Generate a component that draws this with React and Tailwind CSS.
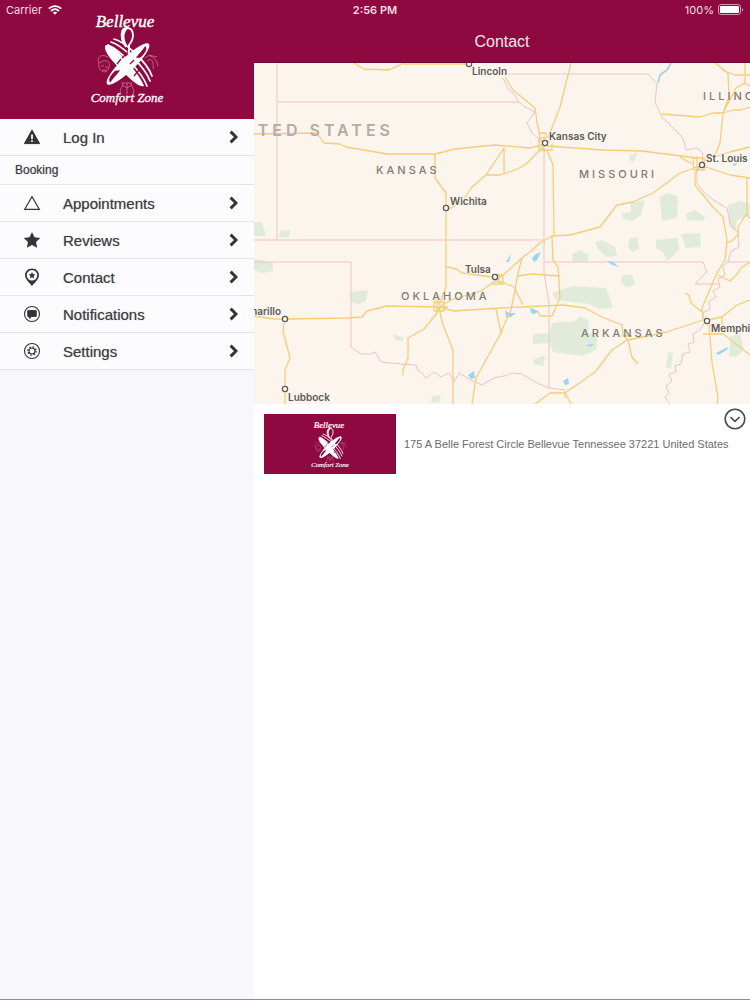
import React from "react";

const menuItems = [
  { label: "Appointments", icon: "triangle" },
  { label: "Reviews", icon: "star" },
  { label: "Contact", icon: "pin" },
  { label: "Notifications", icon: "chat" },
  { label: "Settings", icon: "gear" },
];

const icons = {
  warning: (
    <>
      <path d="M9 2 L16.6 15.6 H1.4 Z" fill="#333436" stroke="#333436" strokeLinejoin="round" />
      <path d="M9 6.6 V11" stroke="#fff" strokeWidth="1.8" />
      <circle cx="9" cy="13" r="1" fill="#fff" />
    </>
  ),
  triangle: <path d="M9 2.6 L16.4 15.4 H1.6 Z" fill="none" stroke="#333436" strokeWidth="1.1" />,
  star: (
    <path
      d="M9 1 L11.5 6.3 L17.3 7 L13 11 L14.2 16.8 L9 13.9 L3.8 16.8 L5 11 L0.7 7 L6.5 6.3 Z"
      fill="#333436"
    />
  ),
  pin: (
    <>
      <path
        fillRule="evenodd"
        d="M9 0.4 C5 0.4 2 3.3 2 7.2 C2 11.2 6 14 9 18 C12 14 16 11.2 16 7.2 C16 3.3 13 0.4 9 0.4 Z M9 2 A5.3 5.3 0 1 1 9 12.6 A5.3 5.3 0 1 1 9 2 Z"
        fill="#333436"
      />
      <path
        d="M9 3.9 L10 6.1 L12.3 6.4 L10.6 8 L11.1 10.4 L9 9.2 L6.9 10.4 L7.4 8 L5.7 6.4 L8 6.1 Z"
        fill="#333436"
      />
    </>
  ),
  chat: (
    <>
      <circle cx="9" cy="9" r="7.5" fill="none" stroke="#333436" strokeWidth="1.1" />
      <path d="M4.8 5.6 H13.2 V11.4 H8.6 L6.6 13.4 V11.4 H4.8 Z" fill="#333436" stroke="#333436" strokeLinejoin="round" />
    </>
  ),
  gear: (
    <g fill="none" stroke="#333436">
      <circle cx="9" cy="9" r="7.5" strokeWidth="1.1" />
      <circle cx="9" cy="9" r="3" strokeWidth="1.1" />
      <circle cx="9" cy="9" r="4.1" strokeWidth="1.4" strokeDasharray="1.5 1.72" />
    </g>
  ),
};

const Logo = ({ className }) => (
  <svg viewBox="0 0 80 100" className={className} role="img" aria-label="Bellevue Comfort Zone">
    <g fill="#fff" fontFamily="'Liberation Serif', serif" fontStyle="italic" textAnchor="middle">
      <text x="38" y="19" fontSize="17" stroke="#fff" strokeWidth="0.4">Bellevue</text>
      <text x="40" y="94" fontSize="13" stroke="#fff" strokeWidth="0.3">Comfort Zone</text>
    </g>
    {/* face, palm and hands behind the whisk */}
    <g fill="none" stroke="#c9769b" strokeWidth="0.8">
      <path d="M21 49 C14 45 9 50 12 55 C10 63 20 68 22 59 C24 54 19 50 12 55 M14 58 H17 M18 59 H21 M15 62 H20" />
      <path d="M58 50 C62 45 69 49 71 58 M60 53 C65 49 67 54 66 61 M62 47 L70 49" />
      <path d="M34 86 C31 80 38 79 35 74 M46 86 C49 80 42 79 45 74 M36 75 H44 M40 75 V86 M35 77 L40 80 L45 77" />
    </g>
    {/* fork */}
    <g fill="none" stroke="#fff" strokeLinecap="round">
      <path d="M27 31 C36 33 59 52 65 68" strokeWidth="1.7" />
      <path d="M24 34 C34 37 57 57 63 73" strokeWidth="1.7" />
      <path d="M21 37 C31 41 54 62 60 78" strokeWidth="1.7" />
    </g>
    <path d="M18 38 C20 35 27 40 34 47 C44 57 54 70 57 78 C52 80 42 70 34 62 C25 53 17 44 18 38 Z" fill="#fff" />
    {/* whisk */}
    <g transform="rotate(46 41 56)">
      <ellipse cx="41" cy="56" rx="7" ry="29" fill="#fff" />
      <path d="M40 31 C44 31 45 36 45 43 L42 46 C41 40 41 36 40 31 Z" fill="#8e093f" />
      <path d="M42 82 C38 81 37 77 37 70 L40 66 C41 72 41 77 42 82 Z" fill="#8e093f" />
      <path d="M40 50 L42 50 L42 62 L40 62 Z" fill="#fff" />
    </g>
    <path d="M35 50 L41 44 M47 68 L52 62 M30 56 L34 51 M43 56 L47 52" stroke="#8e093f" strokeWidth="1.3" />
    {/* spoon */}
    <path d="M39 39 C33 31 33 20 40 20 C47 20 48 30 42 37 V46" fill="none" stroke="#fff" strokeWidth="1.8" />
    <path d="M39 37 C33 31 33 20 41 20.5 C37 24 36 30 40 37 Z" fill="#fff" />
  </svg>
);

const MenuRow = ({ label, icon }) => (
  <li className="border-b border-[#e4e3e8] bg-[#fcfbfe]">
    <a href="#" className="flex h-9 items-center pl-[23px] pr-4">
      <svg viewBox="0 0 18 18" className="h-[18px] w-[18px]" aria-hidden="true">
        {icons[icon]}
      </svg>
      <span className="ml-[22px] flex-1 pt-0.5 text-[15px] text-[#3c3d3f] [text-shadow:0_0_1px_#33343680]">
        {label}
      </span>
      <svg viewBox="0 0 9 14" className="h-3.5 w-[9px]" aria-hidden="true">
        <path d="M1.6 1.6 L7 7 L1.6 12.4" fill="none" stroke="#333436" strokeWidth="2.9" />
      </svg>
    </a>
  </li>
);

const parks = [
  "M254 222 H262 L266 236 H254 Z M280 231 L291 230 L289 237 L279 238 Z",
  "M254 259 L273 262 V271 L262 273 L254 270 Z",
  "M351 292 L368 290 L366 301 L358 304 L351 302 Z",
  "M393 334 L404 338 L403 341 L395 340 Z M432 396 L441 395 L439 403 L431 402 Z",
  "M572 254 L580 250 L589 255 L587 262 H573 Z",
  "M595 242 L602 240 L615 247 L617 256 L606 257 L598 249 Z",
  "M630 238 L638 237 L639 249 L632 252 L628 246 Z",
  "M656 240 L678 238 L679 250 L667 261 L663 252 L656 248 Z",
  "M681 234 L700 233 L701 247 L686 248 Z",
  "M622 275 L632 275 L635 285 L626 287 L621 282 Z",
  "M552 293 L572 286 L606 288 L613 308 L600 309 L588 304 L556 300 Z",
  "M533 334 L549 333 L552 323 L575 321 L580 316 L589 321 L588 333 L598 334 L596 350 L583 356 L553 352 L550 343 L533 344 Z",
  "M533 360 L545 355 L543 366 L534 364 Z",
  "M668 352 L673 353 L671 369 L666 367 Z",
  "M730 337 L740 333 L744 350 L736 357 L729 356 Z",
  "M622 213 L631 212 L630 203 L645 200 L641 215 L632 221 L623 219 Z",
  "M660 197 L667 193 L678 196 L677 218 L662 221 Z",
  "M686 214 L695 210 L705 217 L704 221 L687 220 Z",
  "M728 205 L740 201 L750 204 V216 L737 220 L735 232 L729 226 Z",
  "M630 155 L638 152 L634 162 L629 160 Z",
];

const water = [
  "M506 262 L511 254 L509 262 Z",
  "M532 258 L536 254 L541 252 L537 260 L534 262 Z",
  "M607 261 L613 262 L619 267 L612 265 Z",
  "M505 310 L509 313 L516 313 L511 317 L506 317 Z",
  "M530 308 L534 309 L538 312 L534 314 L531 313 Z",
  "M468 375 L474 371 L475 378 L471 379 Z",
  "M563 381 L568 378 L569 384 L565 385 Z",
  "M716 353 L728 347 L727 350 L718 355 Z",
  "M586 345 L594 344 L590 347 Z",
  "M732 165 L738 162 L735 166 Z",
];

const borders = [
  "M277 63 V240 M277 102 H519",
  "M254 240 H544 M254 262 H351 V347",
  "M351 347 L361 354 L371 354 L375 352 L381 362 L401 364 L416 365 L418 371 L421 372 L426 378 L434 372 L441 377 L449 373 L454 382 L459 373 L471 380 L482 385 L494 378 L504 376 L512 373 L522 374 L537 383 L549 388 L565 390 V398",
  "M544 145 V273 L549 303 V388",
  "M503 78 L508 89 L513 93 L519 102 L525 107 L535 112 L527 123 L532 133 L542 142",
  "M508 74 H648 L657 84 L655 102 L662 117 L673 128 L683 138 L686 150 L697 148 L703 153 L702 163 L697 171 L697 183 L704 192 L713 200 L727 208 L730 223 L738 233 L739 247 L731 251 L728 262 L723 266 L725 275 L718 279 L720 287 L713 291 L716 297 L709 301 L710 309 L703 313 L705 322 L700 330 L693 334 L694 342 L688 344 L690 352 L683 354 L681 364 L675 366 L676 372 L669 374 L672 381 L666 386 L669 393 L665 397 L670 404",
  "M545 262 H703 L707 272 L695 284 H720 M728 262 H750",
];

const roads = [
  "M354 63 L364 69 L389 70 L404 63 M404 64 H467",
  "M254 134 L317 133 L324 143 L340 144 L346 147 L387 154 H435 L455 149 L495 145 L530 148 L545 144",
  "M435 154 V178 L446 193 V287 L439 305",
  "M446 208 L451 208 L462 202 L471 188 L486 175 L504 148 V173 M486 175 L500 175 L515 170 L525 165 L537 153 L545 146",
  "M505 77 L513 90 L535 108 L537 122 L540 137",
  "M571 63 L560 107 L553 125 L548 138",
  "M547 146 L603 150 L642 151 L697 158 M680 157 L692 164",
  "M547 150 L553 165 L554 235 L552 237 L553 260 L558 267 L560 298 L552 316 H540 L537 310",
  "M495 281 L501 277 L523 257 L530 252 L540 243 L552 236 L570 235 L600 227 L617 205 L633 202 L653 193 L680 173 L700 166",
  "M662 114 L700 117 L713 113 L723 113 L733 110 L741 110 L750 107",
  "M700 163 L715 155 L720 143 L723 113 L729 97 L728 73 L715 63 M722 70 L735 75 L750 75 M745 63 V83 L750 86 M745 83 L736 88 L723 113",
  "M703 166 L730 175 L750 178 M747 178 V213 L738 227 V235 L733 240 L727 243 M746 213 L750 219 M703 160 L730 152 L750 147",
  "M700 166 L695 174 L695 185 L713 207 L723 217 L727 240 L725 260 L717 273 L702 308 L703 320",
  "M718 275 L730 281 L738 273 L741 268 L750 262",
  "M708 320 L722 317 L737 305 L750 300 M710 324 H718 L722 333 L750 355 M703 334 H722 V317",
  "M709 323 L712 363 L718 397 L717 404",
  "M703 320 L667 332 L628 340 L623 335 L622 325 L602 317 L585 308 L563 305 L523 307 L500 308 L454 311 L439 307 L387 306 L367 311 L362 317 L347 318 L286 319 H274 L254 316",
  "M685 293 L689 295 L691 303 L702 312",
  "M284 323 L283 331 L290 358 L285 370 V404",
  "M439 307 L437 313 L424 329 L408 338 V358 L403 370 V375",
  "M439 307 L442 322 L453 350 V404",
  "M496 309 L501 333 L476 378 L472 404",
  "M501 333 L504 325 L511 310 L515 290 L518 273 L522 258",
  "M447 267 L456 269 L462 273 L492 277 M495 281 L481 291 L451 300 L439 307",
  "M495 281 L504 283 L514 287 L523 305 M518 276 L532 274 L560 276",
  "M628 340 L632 357 L638 364",
  "M627 340 L612 350 L595 372 L565 393 H550 L535 404 M565 393 L571 404",
  // city ring roads
  "M540 133 H546 V138 H539 V150 H552 V144 M538 141 H550 M541 147 L545 152",
  "M693 158 H704 V170 H694 Z M697 156 V170",
  "M434 302 H444 V311 H434 Z M437 299 V312 M432 307 H448",
  "M492 275 H503 V284 H492 M499 274 V284 M622 336 H632",
];

const states = [
  { name: "KANSAS", x: 376, y: 174 },
  { name: "MISSOURI", x: 579, y: 178 },
  { name: "OKLAHOMA", x: 401, y: 300 },
  { name: "ARKANSAS", x: 581, y: 337 },
  { name: "ILLINOIS", x: 703, y: 100 },
];

const cities = [
  { name: "Lincoln", cx: 469, cy: 64, x: 472, y: 75 },
  { name: "Kansas City", cx: 545, cy: 143, x: 549, y: 140 },
  { name: "St. Louis", cx: 702, cy: 165, x: 706, y: 162 },
  { name: "Wichita", cx: 446, cy: 208, x: 450, y: 205 },
  { name: "Tulsa", cx: 495, cy: 277, x: 465, y: 273 },
  { name: "Amarillo", cx: 285, cy: 319, x: 241, y: 315 },
  { name: "Lubbock", cx: 285, cy: 389, x: 288, y: 401 },
  { name: "Memphis", cx: 707, cy: 321, x: 711, y: 332 },
];

const RegionMap = () => (
  <svg
    viewBox="254 63 496 341"
    className="block w-full bg-[#fbf5ed]"
    role="img"
    aria-label="Map"
    fontFamily="Inter, sans-serif"
  >
    <path d={parks.join(" ")} fill="#e0ecd9" />
    <path d={borders.join(" ")} fill="none" stroke="#efc3c3" strokeWidth="1" />
    <path d="M671 63 L667 70 L660 75 L658 83" fill="none" stroke="#9fcfe0" strokeWidth="1.6" />
    <path d={water.join(" ")} fill="#9bd5ee" />
    <path d={roads.join(" ")} fill="none" stroke="#f6cd78" strokeWidth="1.3" strokeLinejoin="round" />
    <text x="394" y="136" textAnchor="end" fontSize="16" fontWeight="600" fill="#b0ada8" className="tracking-[4px]">
      UNITED STATES
    </text>
    {states.map((s) => (
      <text key={s.name} x={s.x} y={s.y} fontSize="11" fontWeight="500" fill="#7d7b77" className="tracking-[3px]">
        {s.name}
      </text>
    ))}
    {cities.map((c) => (
      <g key={c.name}>
        <circle cx={c.cx} cy={c.cy} r="2.6" fill="#fff" stroke="#5c5a57" strokeWidth="1.3" />
        <text
          x={c.x}
          y={c.y}
          fontSize="10"
          fontWeight="600"
          fill="#5a5957"
          stroke="#fbf5ed"
          strokeWidth="2"
          paintOrder="stroke"
        >
          {c.name}
        </text>
      </g>
    ))}
  </svg>
);

const StatusBar = () => (
  <div className="absolute inset-x-0 top-0 grid h-5 grid-cols-3 items-center px-1.5 font-[Inter,sans-serif] text-[11px] text-[#f6dfe8]">
    <div className="flex items-center gap-1.5">
      <span>Carrier</span>
      <svg viewBox="0 0 14 10" className="h-2.5 w-3.5" aria-hidden="true">
        <g fill="none" stroke="#fff" strokeWidth="1.8">
          <path d="M0.8 3.6 C4.4 0.2 9.6 0.2 13.2 3.6" />
          <path d="M3 6 C5.4 3.8 8.6 3.8 11 6" />
        </g>
        <path d="M7 9.8 L4.8 7.6 C6 6.5 8 6.5 9.2 7.6 Z" fill="#fff" />
      </svg>
    </div>
    <span className="text-center font-semibold">2:56 PM</span>
    <div className="flex items-center justify-end gap-1">
      <span>100%</span>
      <svg viewBox="0 0 26 12" className="h-3 w-[26px]" aria-hidden="true">
        <rect x="0.5" y="0.5" width="22" height="10" rx="2.5" fill="none" stroke="#d795b0" />
        <rect x="2" y="2" width="19" height="7" rx="1" fill="#fff" />
        <path d="M24 4 C25.6 4.4 25.6 7 24 7.4 Z" fill="#d795b0" />
      </svg>
    </div>
  </div>
);

const App = () => {
  return (
    <div className="relative flex min-h-screen border-b border-[#8f8f92] bg-white font-['Liberation_Sans',Arial,sans-serif]">
      <aside className="w-[254px] shrink-0 bg-[#f8f7fc]">
        <div className="flex h-[119px] justify-center bg-[#8e093f] pt-2">
          <Logo className="h-[100px] w-20" />
        </div>
        <nav>
          <ul>
            <MenuRow label="Log In" icon="warning" />
          </ul>
          <h2 className="border-b border-[#e4e3e8] bg-[#fcfbfe] px-[15px] py-1.5 text-xs text-[#3c3d3f] [text-shadow:0_0_1px_#33343680]">
            Booking
          </h2>
          <ul>
            {menuItems.map((item) => (
              <MenuRow key={item.label} label={item.label} icon={item.icon} />
            ))}
          </ul>
        </nav>
      </aside>

      <main className="min-w-0 flex-1">
        <header className="flex h-[63px] items-end justify-center border-b border-[#6d0a33] bg-[#8e093f] pb-2">
          <h1 className="text-base text-[#f8e6ed]">Contact</h1>
        </header>
        <RegionMap />
        <section className="flex items-start gap-2 pl-2.5 pr-1 pt-1">
          <div className="mt-1.5 flex h-[60px] w-[132px] shrink-0 justify-center bg-[#8e093f] py-1">
            <Logo className="h-[52px] w-[42px]" />
          </div>
          <div className="flex min-w-0 flex-1 flex-col">
            <button type="button" aria-label="Show more" className="h-[22px] w-[22px] self-end">
              <svg viewBox="0 0 22 22" className="h-[22px] w-[22px]" fill="none" stroke="#4a4a4c" strokeWidth="1.6">
                <circle cx="11" cy="11" r="9.8" />
                <path d="M6.4 9 L11 13.4 L15.6 9" />
              </svg>
            </button>
            <p className="pt-1 text-[11px] leading-5 text-[#6b6b6e]">
              175 A Belle Forest Circle Bellevue Tennessee 37221 United States
            </p>
          </div>
        </section>
      </main>

      <StatusBar />
    </div>
  );
};

export default App;
